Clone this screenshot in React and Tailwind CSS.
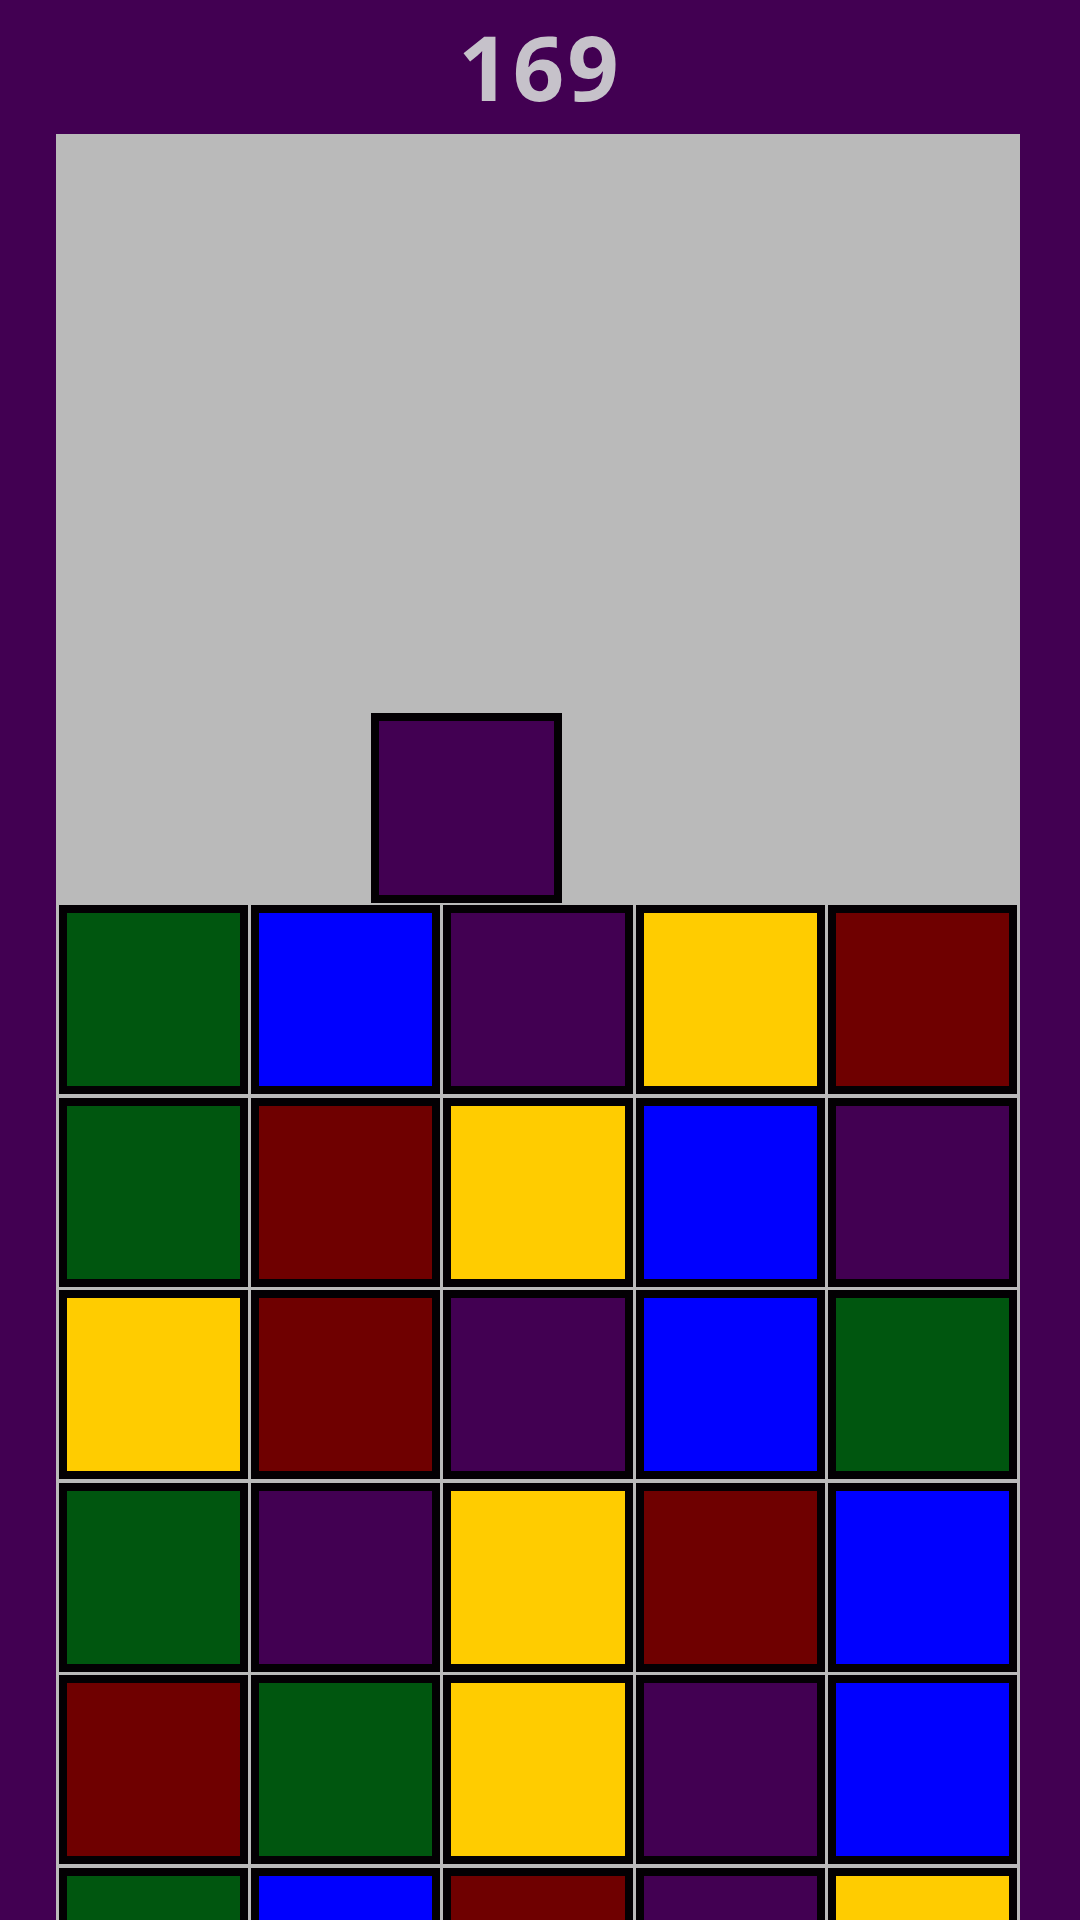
const TILE = {
  g: 'bg-[#00560f]',
  b: 'bg-[#0000ff]',
  p: 'bg-[#420052]',
  y: 'bg-[#ffcc00]',
  r: 'bg-[#6f0000]',
};

// settled stack, top row first
const rows = [
  ['g', 'b', 'p', 'y', 'r'],
  ['g', 'r', 'y', 'b', 'p'],
  ['y', 'r', 'p', 'b', 'g'],
  ['g', 'p', 'y', 'r', 'b'],
  ['r', 'g', 'y', 'p', 'b'],
  ['g', 'b', 'r', 'p', 'y'],
];

function Block({ color, className = '' }) {
  return (
    <div className={`border-[8px] border-[#030003] ${className}`}>
      <div className={`h-full w-full ${TILE[color]}`} />
    </div>
  );
}

export default function App() {
  const score = 169;

  return (
    <div className="flex h-[1920px] w-[1080px] flex-col overflow-hidden bg-[#420052]">
      <header className="h-[134px] shrink-0 pt-[3px] text-center">
        <div className="font-['Open_Sans',sans-serif] text-[90px] font-bold leading-[1.4] tracking-[3px] text-[#c6c2ca]">
          {score}
        </div>
      </header>

      <main className="mx-[56px] w-[964px] shrink-0 bg-[#bababa]">
        {/* open space where the next block drops */}
        <div className="relative h-[771px]">
          <Block color="p" className="absolute left-[315px] top-[579px] h-[190px] w-[191px]" />
        </div>

        <div className="grid grid-cols-5 auto-rows-[189px] gap-x-[3px] gap-y-[3.5px] px-[3px]">
          {rows.flatMap((row, r) =>
            row.map((color, c) => <Block key={`${r}-${c}`} color={color} />),
          )}
        </div>
      </main>
    </div>
  );
}
